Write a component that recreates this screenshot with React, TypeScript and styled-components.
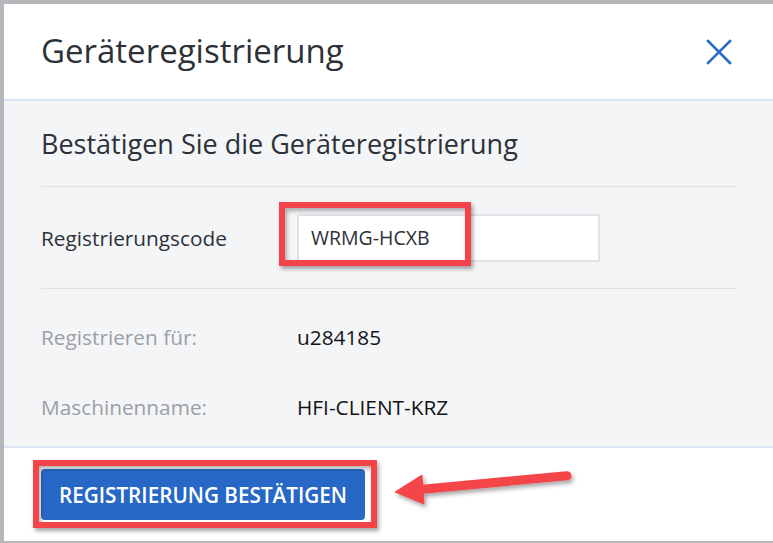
import React from "react";
import styled, { createGlobalStyle } from "styled-components";

const GlobalStyle = createGlobalStyle`
  html, body {
    margin: 0;
    padding: 0;
    background: #ffffff;
  }
  body {
    font-family: "Open Sans", "Noto Sans", sans-serif;
    color: #2d3138;
  }
`;

type InfoItem = { label: string; value: string };

const info: InfoItem[] = [
  { label: "Registrieren für:", value: "u284185" },
  { label: "Maschinenname:", value: "HFI-CLIENT-KRZ" },
];

const CloseIcon = () => (
  <svg width="26" height="26" viewBox="0 0 26 26" fill="none">
    <path
      d="M2 2L24 24M24 2L2 24"
      stroke="#2a6acb"
      strokeWidth="2.6"
      strokeLinecap="square"
    />
  </svg>
);

const Arrow = () => (
  <ArrowSvg width="200" height="56" viewBox="0 0 200 56">
    <defs>
      <filter id="arrowShadow" x="-10%" y="-30%" width="130%" height="180%">
        <feDropShadow dx="2" dy="3" stdDeviation="2" floodColor="#000" floodOpacity="0.35" />
      </filter>
    </defs>
    <g filter="url(#arrowShadow)" fill="#f44449" stroke="#f44449">
      <line x1="40" y1="28.4" x2="187" y2="14.8" strokeWidth="9" strokeLinecap="round" />
      <polygon points="15,31 42,14 44,43" strokeWidth="1" strokeLinejoin="round" />
    </g>
  </ArrowSvg>
);

const App = () => {
  return (
    <>
      <GlobalStyle />
      <Window>
        <Header>
          <Title>Geräteregistrierung</Title>
          <CloseButton aria-label="Schließen">
            <CloseIcon />
          </CloseButton>
        </Header>
        <Body>
          <Subtitle>Bestätigen Sie die Geräteregistrierung</Subtitle>
          <FieldRow>
            <Label>Registrierungscode</Label>
            <InputWrap>
              <CodeInput defaultValue="WRMG-HCXB" readOnly />
              <Highlight className="code" />
            </InputWrap>
          </FieldRow>
          <InfoList>
            {info.map((item) => (
              <InfoRow key={item.label}>
                <Label muted>{item.label}</Label>
                <Value>{item.value}</Value>
              </InfoRow>
            ))}
          </InfoList>
        </Body>
        <Footer>
          <ButtonWrap>
            <PrimaryButton>Registrierung bestätigen</PrimaryButton>
            <Highlight className="button" />
          </ButtonWrap>
          <Arrow />
        </Footer>
      </Window>
    </>
  );
};

const Window = styled.div`
  box-sizing: border-box;
  width: 773px;
  height: 543px;
  display: flex;
  flex-direction: column;
  border-top: 4px solid #b6b7ba;
  border-left: 4px solid #b6b7ba;
  border-bottom: 2px solid #b6b7ba;
  background: #ffffff;
  overflow: hidden;
`;

const Header = styled.div`
  box-sizing: border-box;
  height: 97px;
  flex-shrink: 0;
  display: flex;
  align-items: center;
  justify-content: space-between;
  padding: 0 41px 0 37px;
  border-bottom: 2px solid #dce5f4;
`;

const Title = styled.h1`
  margin: 0 0 2px;
  font-size: 33px;
  font-weight: 400;
  color: #2d3138;
`;

const CloseButton = styled.button`
  display: flex;
  padding: 0;
  border: none;
  background: none;
  cursor: pointer;
`;

const Body = styled.div`
  box-sizing: border-box;
  height: 345px;
  flex-shrink: 0;
  padding: 0 36px 0 37px;
  background: #f4f5f7;
`;

const Subtitle = styled.h2`
  box-sizing: border-box;
  height: 86px;
  margin: 0;
  display: flex;
  align-items: center;
  font-size: 27px;
  font-weight: 400;
  color: #2d3138;
  border-bottom: 1px solid #e0e2e5;
`;

const FieldRow = styled.div`
  box-sizing: border-box;
  height: 102px;
  display: grid;
  grid-template-columns: 256px 1fr;
  align-items: center;
  border-bottom: 1px solid #e0e2e5;
`;

const Label = styled.span<{ muted?: boolean }>`
  font-size: 20.8px;
  color: ${(p) => (p.muted ? "#9ba0a7" : "#2d3138")};
`;

const InputWrap = styled.div`
  position: relative;
  width: 303px;
`;

const CodeInput = styled.input`
  box-sizing: border-box;
  width: 303px;
  height: 48px;
  padding: 0 12px;
  border: 2px solid #e1e2e5;
  background: #ffffff;
  font-family: "Open Sans", "Noto Sans", sans-serif;
  font-size: 19.5px;
  color: #2d3138;
  outline: none;
`;

const Highlight = styled.div`
  position: absolute;
  box-sizing: border-box;
  border: 6px solid #f44449;
  box-shadow: 2px 3px 4px rgba(0, 0, 0, 0.35),
    inset 2px 3px 4px rgba(0, 0, 0, 0.3);
  pointer-events: none;
  &.code {
    left: -18px;
    top: -12px;
    width: 192px;
    height: 64px;
  }
  &.button {
    left: -8px;
    top: -9px;
    width: 344px;
    height: 68px;
  }
`;

const InfoList = styled.div`
  padding-top: 13px;
`;

const InfoRow = styled.div`
  height: 70px;
  display: grid;
  grid-template-columns: 256px 1fr;
  align-items: center;
`;

const Value = styled.span`
  font-size: 20.8px;
  color: #111317;
`;

const Footer = styled.div`
  position: relative;
  flex: 1;
  display: flex;
  align-items: flex-start;
  padding: 21px 0 0 37px;
  border-top: 2px solid #dce5f4;
  background: #ffffff;
`;

const ButtonWrap = styled.div`
  position: relative;
`;

const PrimaryButton = styled.button`
  box-sizing: border-box;
  width: 324px;
  height: 51px;
  border: none;
  border-radius: 4px;
  background: #2768c6;
  color: #ffffff;
  font-family: "Open Sans", "Noto Sans", sans-serif;
  font-size: 20.7px;
  font-weight: 600;
  text-transform: uppercase;
  cursor: pointer;
`;

const ArrowSvg = styled.svg`
  position: absolute;
  left: 376px;
  top: 13px;
  overflow: visible;
`;

export default App;
